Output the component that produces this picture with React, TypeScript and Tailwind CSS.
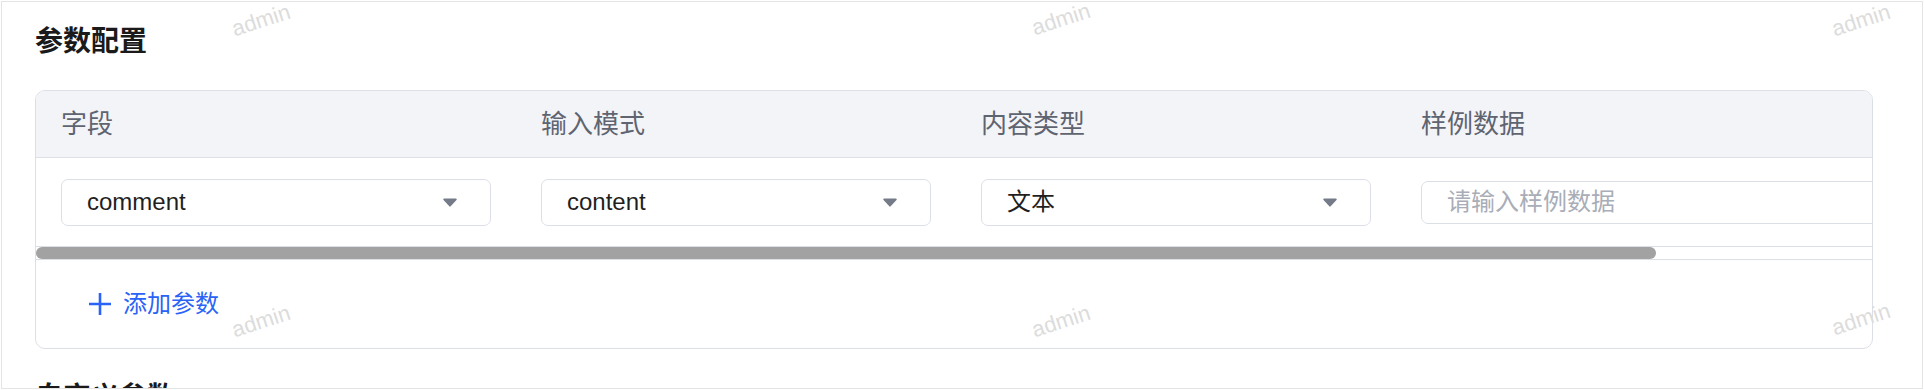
const marks = [
  "left-[261px] top-[20px]",
  "left-[1061px] top-[19px]",
  "left-[1861px] top-[20px]",
  "left-[261px] top-[321px]",
  "left-[1061px] top-[321px]",
  "left-[1861px] top-[319px]",
];

function Caret() {
  return (
    <svg width="14" height="9" viewBox="0 0 14 9" className="shrink-0">
      <path
        d="M1.2 0.5h11.6a0.9 0.9 0 0 1 0.7 1.5L7.7 8.2a0.9 0.9 0 0 1 -1.4 0L0.5 2A0.9 0.9 0 0 1 1.2 0.5z"
        fill="#767b89"
      />
    </svg>
  );
}

function SelectBox({ value }: { value: string }) {
  return (
    <div className="flex h-[47px] w-full items-center justify-between rounded-[7px] border border-[#dcdfe6] bg-white pl-[25px] pr-[33px]">
      <span className="text-[24px] leading-none text-[#1f1f1f]">{value}</span>
      <Caret />
    </div>
  );
}

export default function App() {
  return (
    <div className="relative h-[390px] w-[1924px] overflow-hidden bg-white p-px font-['Liberation_Sans','Noto_Sans_CJK_SC',sans-serif]">
      <div className="h-full overflow-hidden border border-[#e4e4e4] pl-[33px] pr-[49px] pt-[26px]">
        <h2 className="text-[28px] font-semibold leading-[28px] text-[#1a1a1a]">参数配置</h2>

        <div className="mt-[34px] overflow-hidden rounded-[10px] border border-[#dcdfe6]">
          <div className="overflow-hidden">
            <div className="w-[2081px]">
              {/* header */}
              <div className="flex h-[67px] items-center border-b border-[#dcdfe6] bg-[#f3f4f8] text-[26px] text-[#5f6471]">
                <div className="w-[480px] shrink-0 pl-[25px]">字段</div>
                <div className="w-[440px] shrink-0 pl-[25px]">输入模式</div>
                <div className="w-[440px] shrink-0 pl-[25px]">内容类型</div>
                <div className="w-[721px] shrink-0 pl-[25px]">样例数据</div>
              </div>
              {/* row */}
              <div className="flex h-[88px] items-center">
                <div className="w-[480px] shrink-0 px-[25px]">
                  <SelectBox value="comment" />
                </div>
                <div className="w-[440px] shrink-0 px-[25px]">
                  <SelectBox value="content" />
                </div>
                <div className="w-[440px] shrink-0 px-[25px]">
                  <SelectBox value="文本" />
                </div>
                <div className="w-[721px] shrink-0 px-[25px]">
                  <input
                    placeholder="请输入样例数据"
                    className="h-[43px] w-full rounded-[7px] border border-[#dcdfe6] bg-white px-[25px] text-[24px] text-[#1f1f1f] outline-none placeholder:text-[#a9adb7]"
                  />
                </div>
              </div>
            </div>
          </div>

          {/* horizontal scrollbar */}
          <div className="h-[14px] border-y border-[#dcdfe6] bg-white">
            <div className="h-[12px] w-[1620px] rounded-full bg-[#a2a2a2]" />
          </div>

          <div className="flex h-[88px] items-center pl-[53px]">
            <button className="flex items-center gap-[12px] text-[24px] text-[#2a63f5]">
              <svg width="22" height="22" viewBox="0 0 22 22">
                <path d="M11 0v22M0 11h22" stroke="#2a63f5" strokeWidth="2.6" />
              </svg>
              <span className="leading-none">添加参数</span>
            </button>
          </div>
        </div>

        <h2 className="mt-[35px] text-[28px] font-semibold leading-[28px] text-[#1a1a1a]">自定义参数</h2>
      </div>

      {marks.map((pos) => (
        <span
          key={pos}
          className={`pointer-events-none absolute ${pos} -translate-x-1/2 -translate-y-1/2 -rotate-[18deg] select-none text-[22px] text-[#dcdcdc]`}
        >
          admin
        </span>
      ))}
    </div>
  );
}
